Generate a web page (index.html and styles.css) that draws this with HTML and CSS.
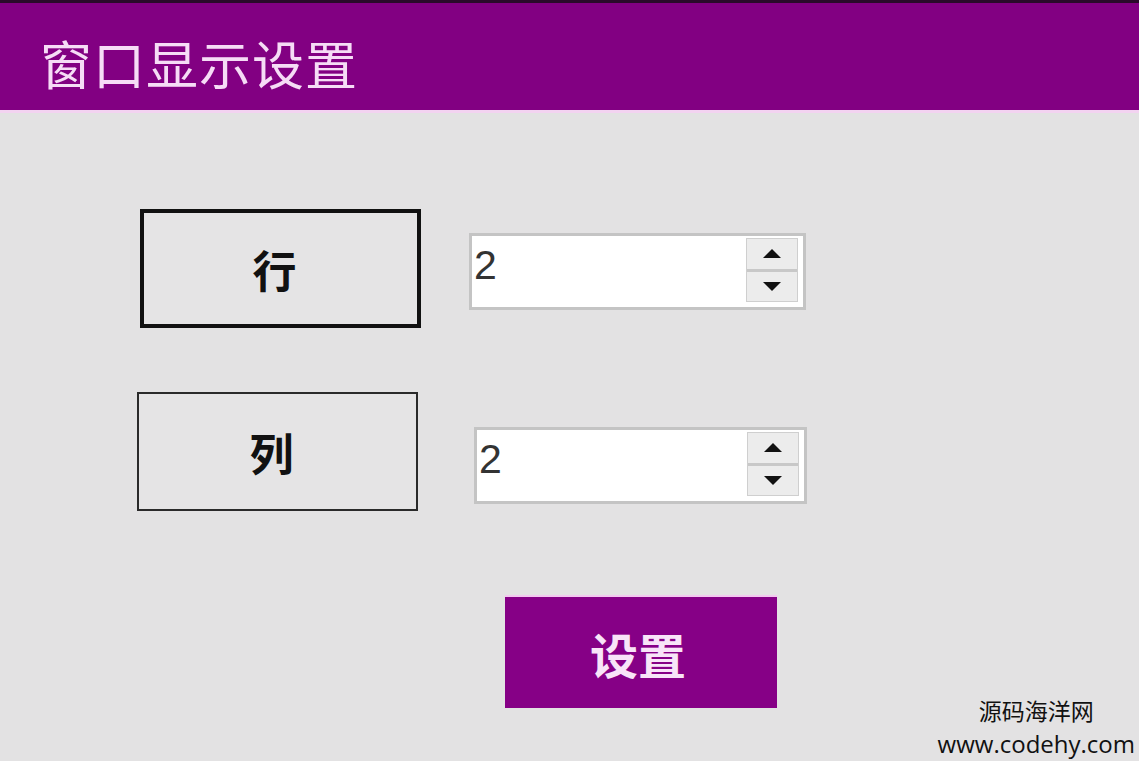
FILE: index.html
```html
<!DOCTYPE html>
<html lang="zh">
<head>
    <meta charset="UTF-8">
    <title>窗口显示设置</title>
    <link rel="stylesheet" href="styles.css">
</head>
<body>
    <header class="titlebar">
        <h1>窗口显示设置</h1>
    </header>
    <main class="form">
        <div class="row row-1">
            <button class="label thick">行</button>
            <div class="spin">
                <span class="value">2</span>
                <div class="arrows">
                    <span class="up"></span>
                    <span class="down"></span>
                </div>
            </div>
        </div>
        <div class="row row-2">
            <button class="label">列</button>
            <div class="spin">
                <span class="value">2</span>
                <div class="arrows">
                    <span class="up"></span>
                    <span class="down"></span>
                </div>
            </div>
        </div>
        <div class="actions">
            <button class="apply">设置</button>
        </div>
    </main>
    <div class="watermark">
        <span class="wm-name">源码海洋网</span>
        <span class="wm-url">www.codehy.com</span>
    </div>
</body>
</html>
```

FILE: styles.css
```css
*{
    margin: 0;
    padding: 0;
    box-sizing: border-box;
    font-family: "Noto Sans CJK SC", "Liberation Sans", sans-serif;
}
body{
    width: 1139px;
    height: 761px;
    overflow: hidden;
    background: #e3e2e3;
    position: relative;
}
.titlebar{
    height: 113px;
    background: #820082;
    border-top: 3px solid #2a0a2a;
    border-bottom: 3px solid #f3d3f1;
    display: flex;
    align-items: center;
    padding-left: 40px;
}
.titlebar h1{
    font-size: 52px;
    font-weight: 400;
    color: #f6dcf6;
    letter-spacing: 1px;
    line-height: 1;
    margin-top: 12px;
}
.form{
    display: flex;
    flex-direction: column;
    padding-top: 96px;
}
.row{
    display: flex;
    align-items: flex-start;
}
.row-1{
    padding-left: 140px;
    gap: 48px;
}
.row-2{
    margin-top: 64px;
    padding-left: 137px;
    gap: 56px;
}
.label{
    width: 281px;
    height: 119px;
    padding-right: 12px;
    background: #e5e4e5;
    border: 2px solid #2a2a2a;
    font-size: 44px;
    font-weight: 700;
    color: #111;
    cursor: pointer;
}
.label.thick{
    border: 4px solid #111;
}
.spin{
    width: 337px;
    height: 77px;
    background: #fff;
    border: 3px solid #c4c4c4;
    display: flex;
    align-items: flex-start;
    justify-content: space-between;
}
.row-1 .spin{
    margin-top: 24px;
}
.row-2 .spin{
    margin-top: 35px;
    width: 333px;
}
.value{
    font-family: "Liberation Sans", sans-serif;
    font-size: 41px;
    color: #333;
    line-height: 1;
    padding: 9px 0 0 2px;
}
.arrows{
    width: 52px;
    height: 64px;
    margin: 2px 5px 0 0;
    display: flex;
    flex-direction: column;
    background: #ececec;
    border: 1px solid #cfcfcf;
}
.arrows span{
    flex: 1;
    display: flex;
    align-items: center;
    justify-content: center;
}
.arrows .up{
    border-bottom: 3px solid #c8c8c8;
}
.arrows .up::after{
    content: "";
    border-left: 9px solid transparent;
    border-right: 9px solid transparent;
    border-bottom: 9px solid #111;
}
.arrows .down::after{
    content: "";
    border-left: 9px solid transparent;
    border-right: 9px solid transparent;
    border-top: 9px solid #111;
}
.actions{
    margin-top: 84px;
    padding-left: 505px;
}
.apply{
    width: 272px;
    height: 113px;
    padding-right: 6px;
    background: #860086;
    border: none;
    border-top: 2px solid #f3c8f0;
    color: #f8e4f8;
    font-size: 48px;
    font-weight: 700;
    cursor: pointer;
}
.watermark{
    position: absolute;
    right: 4px;
    bottom: 1px;
    display: flex;
    flex-direction: column;
    align-items: center;
    color: #111;
}
.wm-name{
    font-size: 23px;
    line-height: 34px;
}
.wm-url{
    font-family: "Open Sans", sans-serif;
    font-size: 24px;
    line-height: 33px;
}
```
